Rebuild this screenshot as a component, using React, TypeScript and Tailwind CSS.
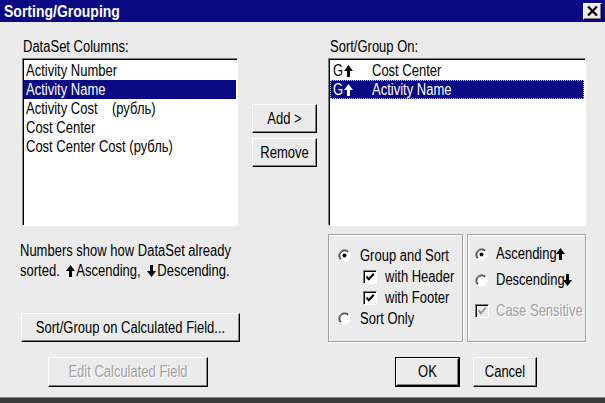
import React from "react";

function T({ children, className = "" }: { children: React.ReactNode; className?: string }) {
  return <span className={`inline-block scale-y-[1.2] whitespace-pre ${className}`}>{children}</span>;
}

function Arrow({ down = false, color = "#000", className = "" }: { down?: boolean; color?: string; className?: string }) {
  return (
    <svg width="9" height="12" viewBox="0 0 9 12" className={className}>
      <path
        d={down ? "M4.5 12 L9 6 L6 6 L6 0 L3 0 L3 6 L0 6 Z" : "M4.5 0 L9 6 L6 6 L6 12 L3 12 L3 6 L0 6 Z"}
        fill={color}
      />
    </svg>
  );
}

function Radio({ checked = false }: { checked?: boolean }) {
  return (
    <svg width="13" height="13" viewBox="0 0 13 13" className="shrink-0">
      <circle cx="6.5" cy="6.5" r="6" fill="#fff" />
      <path d="M2.26 10.74 A6 6 0 0 1 10.74 2.26" fill="none" stroke="#808080" strokeWidth="1" />
      <path d="M2.97 10.03 A5 5 0 0 1 10.03 2.97" fill="none" stroke="#000" strokeWidth="1" />
      {checked && <circle cx="6.5" cy="6.5" r="2" fill="#000" />}
    </svg>
  );
}

function Check({ disabled = false }: { disabled?: boolean }) {
  return (
    <div
      className={`w-[14px] h-[14px] shrink-0 border border-t-[#808080] border-l-[#808080] border-r-white border-b-white shadow-[inset_1px_1px_0_#000] flex items-center justify-center ${
        disabled ? "bg-[#ebebeb]" : "bg-white"
      }`}
    >
      <svg width="10" height="10" viewBox="0 0 10 10">
        <path d="M1.5 4.5 L3.8 7.2 L8.8 1.8" fill="none" stroke={disabled ? "#9a9a9a" : "#000"} strokeWidth="2" />
      </svg>
    </div>
  );
}

function Btn({
  children,
  className = "",
  disabled = false,
}: {
  children: React.ReactNode;
  className?: string;
  disabled?: boolean;
}) {
  return (
    <div
      className={`flex items-center justify-center bg-[#ebebeb] border border-t-white border-l-white border-r-black border-b-black shadow-[inset_-1px_-1px_0_#808080] ${className}`}
    >
      <T className={disabled ? "text-[#a0a0a0] [text-shadow:1px_1px_0_#fff]" : ""}>{children}</T>
    </div>
  );
}

export default function App() {
  const leftItems = ["Activity Number", "Activity Name", "Activity Cost    (рубль)", "Cost Center", "Cost Center Cost (рубль)"];
  const rightItems = ["Cost Center", "Activity Name"];
  return (
    <div className="w-[605px] h-[403px] bg-[#ebebeb] flex flex-col overflow-hidden [font-family:'Liberation_Sans',Arial,sans-serif] text-[13px] leading-[16px] text-black">
      {/* Title bar */}
      <div className="h-[22px] shrink-0 bg-[#0a0a84] flex items-center justify-between pl-[4px] pr-[3px]">
        <span className="inline-block scale-y-[1.15] text-white font-bold text-[14px]">Sorting/Grouping</span>
        <div className="w-[19px] h-[17px] bg-[#ebebeb] border border-t-white border-l-white border-r-black border-b-black shadow-[inset_-1px_-1px_0_#808080] flex items-center justify-center">
          <svg width="11" height="10" viewBox="0 0 11 10">
            <path d="M1 0.5 L10 9.5 M10 0.5 L1 9.5" stroke="#000" strokeWidth="2.2" />
          </svg>
        </div>
      </div>

      {/* Body */}
      <div className="flex-1 flex pt-[17px]">
        {/* Left column */}
        <div className="ml-[20px] w-[220px] flex flex-col">
          <div className="ml-[3px] h-[16px]">
            <T>DataSet Columns:</T>
          </div>
          <div className="mt-[3px] ml-[2px] w-[216px] h-[168px] bg-white border border-t-[#808080] border-l-[#808080] border-r-white border-b-white shadow-[inset_1px_1px_0_#000] pt-[2px] px-[1px]">
            {leftItems.map((it, i) => (
              <div
                key={i}
                className={`h-[19px] flex items-center pl-[2px] ${i === 1 ? "bg-[#0a0a84] text-white" : ""}`}
              >
                <T>{it}</T>
              </div>
            ))}
          </div>
          <div className="mt-[15px] leading-[20px]">
            <div>
              <T>Numbers show how DataSet already</T>
            </div>
            <div className="flex items-center">
              <T>sorted. </T>
              <Arrow className="ml-[3px] mr-[1px]" />
              <T>Ascending, </T>
              <Arrow down className="ml-[3px] mr-[1px]" />
              <T>Descending.</T>
            </div>
          </div>
          <Btn className="mt-[32px] ml-[1px] w-[219px] h-[29px]">Sort/Group on Calculated Field...</Btn>
          <Btn disabled className="mt-[15px] ml-[28px] w-[160px] h-[30px]">
            Edit Calculated Field
          </Btn>
        </div>

        {/* Middle column */}
        <div className="ml-[12px] w-[65px] flex flex-col">
          <Btn className="mt-[65px] h-[29px]">Add &gt;</Btn>
          <Btn className="mt-[5px] h-[29px]">Remove</Btn>
        </div>

        {/* Right column */}
        <div className="ml-[11px] w-[258px] flex flex-col">
          <div className="ml-[2px] h-[16px]">
            <T>Sort/Group On:</T>
          </div>
          <div className="mt-[3px] w-[258px] h-[168px] bg-white border border-t-[#808080] border-l-[#808080] border-r-white border-b-white shadow-[inset_1px_1px_0_#000] pt-[2px] px-[1px]">
            {rightItems.map((it, i) => (
              <div
                key={i}
                className={`h-[19px] flex items-center pl-[3px] ${
                  i === 1 ? "bg-[#0a0a84] text-white outline outline-1 outline-dotted outline-[#c8c8ff] -outline-offset-1" : ""
                }`}
              >
                <div className="w-[39px] flex items-center">
                  <T>G</T>
                  <Arrow color={i === 1 ? "#fff" : "#000"} className="ml-[1px]" />
                </div>
                <T>{it}</T>
              </div>
            ))}
          </div>

          <div className="mt-[8px] flex gap-[4px]">
            <div className="w-[135px] h-[108px] border border-[#a0a0a0] shadow-[inset_1px_1px_0_#fff,1px_1px_0_#fff] pt-[10px] pl-[9px]">
              <div className="h-[21px] flex items-center gap-[9px]">
                <Radio checked />
                <T>Group and Sort</T>
              </div>
              <div className="h-[21px] flex items-center gap-[8px] pl-[25px]">
                <Check />
                <T>with Header</T>
              </div>
              <div className="h-[21px] flex items-center gap-[8px] pl-[25px]">
                <Check />
                <T>with Footer</T>
              </div>
              <div className="h-[21px] flex items-center gap-[9px]">
                <Radio />
                <T>Sort Only</T>
              </div>
            </div>
            <div className="w-[119px] h-[108px] border border-[#a0a0a0] shadow-[inset_1px_1px_0_#fff,1px_1px_0_#fff] pt-[9px] pl-[7px]">
              <div className="h-[20px] flex items-center gap-[8px]">
                <Radio checked />
                <div className="flex items-center">
                  <T>Ascending</T>
                  <Arrow className="-ml-[1px]" />
                </div>
              </div>
              <div className="mt-[6px] h-[20px] flex items-center gap-[8px]">
                <Radio />
                <div className="flex items-center">
                  <T>Descending</T>
                  <Arrow down className="-ml-[2px]" />
                </div>
              </div>
              <div className="mt-[11px] h-[20px] flex items-center gap-[7px]">
                <Check disabled />
                <T className="text-[#a0a0a0] [text-shadow:1px_1px_0_#fff]">Case Sensitive</T>
              </div>
            </div>
          </div>

          <div className="mt-[15px] ml-[67px] flex gap-[13px]">
            <div className="w-[65px] h-[30px] border border-black flex">
              <Btn className="flex-1">OK</Btn>
            </div>
            <Btn className="w-[64px] h-[30px]">Cancel</Btn>
          </div>
        </div>
      </div>

      {/* Bottom edge */}
      <div className="h-[6px] shrink-0 bg-[#3c3c3c] border-t border-[#8a8a8a]" />
    </div>
  );
}
